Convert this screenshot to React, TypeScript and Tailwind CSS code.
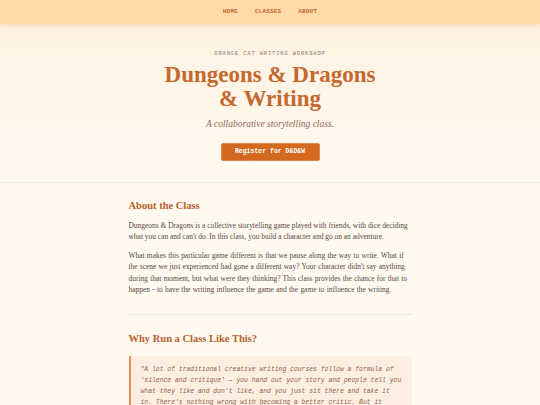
import React from 'react';

const serif = { fontFamily: '"Liberation Serif", "DejaVu Serif", serif' };
const mono = { fontFamily: '"Liberation Mono", "DejaVu Sans Mono", monospace' };

export default function App() {
  return (
    <div className="min-h-screen bg-[#fff9ef]" style={serif}>
      {/* top nav */}
      <nav className="relative z-10 flex h-[24px] items-center justify-center gap-[17px] bg-[#ffd9a8] shadow-[0_2px_5px_rgba(240,180,120,0.35)]">
        {['HOME', 'CLASSES', 'ABOUT'].map((l) => (
          <a key={l} className="text-[5.8px] font-bold tracking-[0.05em] text-[#c0652a]" style={mono}>
            {l}
          </a>
        ))}
      </nav>

      {/* hero */}
      <header className="border-b border-[#f6ead8] bg-gradient-to-b from-[#fff2e2] to-[#fff9ef] pt-[26px] pb-[21px] text-center">
        <p className="text-[5.5px] tracking-[0.15em] text-[#8a7a70]" style={mono}>
          ORANGE CAT WRITING WORKSHOP
        </p>
        <h1 className="mx-auto mt-[5px] w-[220px] text-[23px] leading-[24px] font-semibold text-[#c4692f]">
          Dungeons &amp; Dragons &amp; Writing
        </h1>
        <p className="mt-[6px] text-[9.5px] italic text-[#8b6b5b]">A collaborative storytelling class.</p>
        <button
          className="mt-[11px] h-[18px] w-[99px] rounded-[2px] border border-[#e58a4a] bg-[#d2691e] text-[6.5px] font-bold text-white"
          style={mono}
        >
          Register for D&amp;D&amp;W
        </button>
      </header>

      {/* content */}
      <main className="mx-auto w-[283px] pt-[16px] text-[#564a44]">
        <h2 className="text-[10.5px] leading-[14px] font-semibold text-[#b5602d]">About the Class</h2>
        <p className="mt-[7px] text-[7.45px] leading-[11.6px]">
          Dungeons &amp; Dragons is a collective storytelling game played with friends, with dice deciding what you
          can and can't do. In this class, you build a character and go on an adventure.
        </p>
        <p className="mt-[7px] text-[7.45px] leading-[11.6px] [word-spacing:0.4px]">
          What makes this particular game different is that we pause along the way to write. What if the scene we
          just experienced had gone a different way? Your character didn't say anything during that moment, but
          what were they thinking? This class provides the chance for that to happen - to have the writing
          influence the game and the game to influence the writing.
        </p>
        <hr className="mt-[18px] border-[#f3e6d6]" />
        <h2 className="mt-[17px] text-[10.5px] leading-[14px] font-semibold text-[#b5602d]">
          Why Run a Class Like This?
        </h2>
        <blockquote
          className="mt-[10px] rounded-r-[2px] border-l-2 border-[#e0925a] bg-[#fdeee2] px-[10px] pt-[8px] pb-[8px] text-[6.4px] leading-[11px] italic text-[#8f6548]"
          style={mono}
        >
          "A lot of traditional creative writing courses follow a formula of 'silence and critique' — you hand out
          your story and people tell you what they like and don't like, and you just sit there and take it in.
          There's nothing wrong with becoming a better critic. But it
        </blockquote>
      </main>
    </div>
  );
}
